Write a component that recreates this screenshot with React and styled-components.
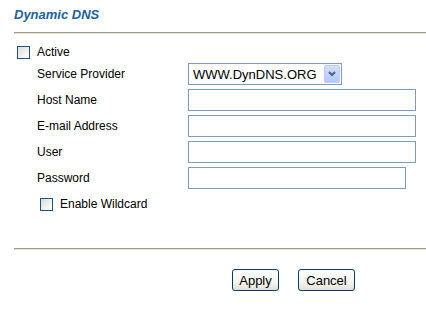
import React from 'react';
import styled, { createGlobalStyle } from 'styled-components';

const GlobalStyle = createGlobalStyle`
  html, body {
    margin: 0;
    padding: 0;
    background: #ffffff;
  }
  body {
    font-family: "Liberation Sans", Arial, sans-serif;
    color: #000000;
  }
`;

const Page = styled.div`
  width: 426px;
  height: 310px;
  overflow: hidden;
`;

const Header = styled.header`
  padding: 7px 0 0 14px;
`;

const Title = styled.h1`
  margin: 0;
  font-size: 13px;
  line-height: 15px;
  font-weight: bold;
  font-style: italic;
  color: #22629c;
`;

const Rule = styled.div`
  margin-left: 14px;
  margin-top: ${(p) => p.$top}px;
  height: 1px;
  background: #9d9b8e;
  border-bottom: 1px solid #e4e0cc;
`;

const Form = styled.form`
  padding-left: 17px;
  margin-top: 9px;
`;

const CheckRow = styled.label`
  display: flex;
  align-items: center;
  gap: 7px;
  height: ${(p) => p.$height}px;
  padding-left: ${(p) => p.$indent || 0}px;
  font-size: 12px;
`;

const Box = styled.span`
  box-sizing: border-box;
  width: 13px;
  height: 13px;
  border: 1px solid #1c5180;
  background: linear-gradient(135deg, #dcdcd7 0%, #f2f2ee 60%, #ffffff 100%);
`;

const Fields = styled.div`
  display: grid;
  grid-template-columns: 151px auto;
  grid-auto-rows: 26px;
  align-items: center;
  padding-left: 20px;
`;

const Label = styled.span`
  font-size: 12px;
  line-height: 14px;
`;

const TextInput = styled.input`
  box-sizing: border-box;
  width: ${(p) => p.$width}px;
  height: 22px;
  margin: 0;
  padding: 1px 3px;
  border: 1px solid #7f9db9;
  background: #ffffff;
  font-family: "Liberation Sans", Arial, sans-serif;
  font-size: 13px;
  outline: none;
`;

const Select = styled.div`
  box-sizing: border-box;
  width: 154px;
  height: 22px;
  display: flex;
  align-items: center;
  justify-content: space-between;
  padding: 1px 1px 1px 4px;
  border: 1px solid #7f9db9;
  background: #ffffff;
  font-size: 13px;
  line-height: 15px;
`;

const DropButton = styled.span`
  box-sizing: border-box;
  width: 16px;
  height: 18px;
  display: flex;
  align-items: center;
  justify-content: center;
  border: 1px solid #b9cdf8;
  border-radius: 2px;
  background: linear-gradient(180deg, #d3e0fd 0%, #c1d3fb 50%, #b4c9f8 100%);
`;

const Actions = styled.div`
  display: flex;
  gap: 19px;
  padding-left: 232px;
  margin-top: 19px;
`;

const Button = styled.button`
  box-sizing: border-box;
  width: ${(p) => p.$width}px;
  height: 22px;
  padding: 0;
  border: 1px solid #003c74;
  border-radius: 3px;
  background: linear-gradient(180deg, #ffffff 0%, #f5f4ef 60%, #e3e1d6 100%);
  font-family: "Liberation Sans", Arial, sans-serif;
  font-size: 13px;
  color: #000000;
`;

const Chevron = () => (
  <svg width="8" height="6" viewBox="0 0 8 6">
    <path d="M1 1 L4 4 L7 1" fill="none" stroke="#4d6185" strokeWidth="2" />
  </svg>
);

const App = () => {
  return (
    <Page>
      <GlobalStyle />
      <Header>
        <Title>Dynamic DNS</Title>
      </Header>
      <Rule $top={10} />
      <Form onSubmit={(e) => e.preventDefault()}>
        <CheckRow $height={18}>
          <Box />
          Active
        </CheckRow>
        <Fields>
          <Label>Service Provider</Label>
          <Select>
            <span>WWW.DynDNS.ORG</span>
            <DropButton>
              <Chevron />
            </DropButton>
          </Select>
          <Label>Host Name</Label>
          <TextInput $width={228} />
          <Label>E-mail Address</Label>
          <TextInput $width={228} />
          <Label>User</Label>
          <TextInput $width={228} />
          <Label>Password</Label>
          <TextInput $width={218} type="password" />
        </Fields>
        <CheckRow $height={26} $indent={23}>
          <Box />
          Enable Wildcard
        </CheckRow>
      </Form>
      <Rule $top={31} />
      <Actions>
        <Button $width={47}>Apply</Button>
        <Button $width={57}>Cancel</Button>
      </Actions>
    </Page>
  );
};

export default App;
